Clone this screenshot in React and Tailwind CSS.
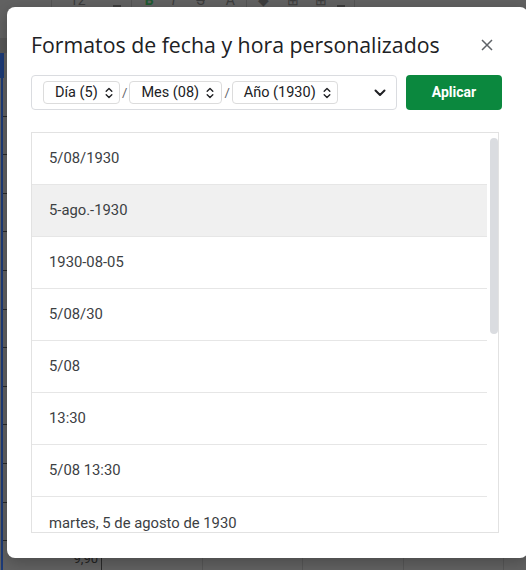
import React from "react";

const rows = [
  "5/08/1930",
  "5-ago.-1930",
  "1930-08-05",
  "5/08/30",
  "5/08",
  "13:30",
  "5/08 13:30",
  "martes, 5 de agosto de 1930",
];

function UpDown() {
  return (
    <svg width="8" height="12" viewBox="0 0 8 12" className="ml-[7px]">
      <path d="M1.2 4.3 L4 1.6 L6.8 4.3" fill="none" stroke="#202124" strokeWidth="1.4" strokeLinecap="round" strokeLinejoin="round" />
      <path d="M1.2 7.7 L4 10.4 L6.8 7.7" fill="none" stroke="#202124" strokeWidth="1.4" strokeLinecap="round" strokeLinejoin="round" />
    </svg>
  );
}

function Pill({ label, w }) {
  return (
    <div className={`flex items-center h-[23px] rounded-[4px] border border-[#dcdcdc] pl-[11px] ${w} text-[14.5px] text-[#202124]`}>
      <span>{label}</span>
      <UpDown />
    </div>
  );
}

export default function App() {
  return (
    <div className="relative w-[526px] h-[570px] overflow-hidden bg-[#626262]" style={{ fontFamily: "Roboto, 'Liberation Sans', sans-serif" }}>
      {/* background spreadsheet */}
      <div className="flex flex-col w-full h-full">
        <div className="h-[45px] flex items-start text-[#3d3d3d] text-[14px] leading-[14px] -mt-[7px]">
          <div className="w-[52px] border-r border-[#555] h-[16px]" />
          <span className="ml-[18px]">12</span>
          <span className="ml-[27px] w-[8px] h-[2px] bg-[#3d3d3d] mt-[12px]" />
          <div className="ml-[10px] border-r border-[#555] h-[16px]" />
          <span className="ml-[13px] font-bold text-[#1f5a32]">B</span>
          <span className="ml-[18px] italic">I</span>
          <span className="ml-[21px] line-through">S</span>
          <span className="ml-[21px]">A</span>
          <div className="ml-[11px] border-r border-[#555] h-[16px]" />
          <span className="ml-[11px]">◆</span>
          <span className="ml-[18px]">⊞</span>
          <span className="ml-[16px]">⊞</span>
          <span className="ml-[10px] w-[8px] h-[2px] bg-[#3d3d3d] mt-[12px]" />
          <div className="ml-[9px] border-r border-[#555] h-[16px]" />
          <span className="ml-[12px]">···</span>
        </div>
        <div className="h-[15px] bg-[#585858]" />
        <div className="h-[25px] w-[4px] border-2 border-[#1d3b78]" />
        <div className="flex-1 flex">
          <div className="w-[101px] ml-[1px] border-l-2 border-r border-l-[#1d3b78] border-r-[#2a2a2a] flex flex-col">
            {Array.from({ length: 12 }).map((_, i) => (
              <div key={i} className="h-[38.6px] border-b border-[#2a2a2a] shrink-0" />
            ))}
            <div className="text-right pr-[3px] text-[13px] leading-[15px] text-[#222] mt-[10px]">9,90</div>
          </div>
          <div className="w-[101px] border-r border-[#575757]" />
          <div className="w-[100px] border-r border-[#575757]" />
          <div className="w-[101px] border-r border-[#575757]" />
          <div className="w-[100px] border-r border-[#575757]" />
        </div>
      </div>

      {/* dialog */}
      <div className="absolute left-[7px] top-[7px] w-[521px] h-[551px] bg-white rounded-[8px] shadow-[0_4px_16px_rgba(0,0,0,0.25)] pl-[24px] pr-[24px] flex flex-col">
        <div className="flex items-center justify-between h-[62px] pt-[13px]">
          <h1 className="text-[21.3px] text-[#202124]" style={{ fontFamily: "'Open Sans', Roboto, sans-serif" }}>
            Formatos de fecha y hora personalizados
          </h1>
          <svg width="12" height="12" viewBox="0 0 12 12" className="mr-[11px] mt-[1px]">
            <path d="M1 1 L11 11 M11 1 L1 11" stroke="#5f6368" strokeWidth="1.5" />
          </svg>
        </div>
        <div className="flex items-center mt-[6px] h-[35px]">
          <div className="w-[366px] h-[35px] border border-[#dadce0] rounded-[4px] flex items-center pl-[11px] pr-[10px]">
            <Pill label="Día (5)" w="w-[77px]" />
            <span className="mx-[2px] text-[13px] text-[#5f6368]">/</span>
            <Pill label="Mes (08)" w="w-[93px]" />
            <span className="mx-[2px] text-[13px] text-[#5f6368]">/</span>
            <Pill label="Año (1930)" w="w-[106px]" />
            <div className="flex-1" />
            <svg width="12" height="8" viewBox="0 0 12 8">
              <path d="M1.5 1.5 L6 6 L10.5 1.5" fill="none" stroke="#202124" strokeWidth="2" strokeLinecap="round" strokeLinejoin="round" />
            </svg>
          </div>
          <button className="ml-[9px] w-[96px] h-[35px] rounded-[4px] bg-[#0b883e] text-white text-[14px] font-bold">
            Aplicar
          </button>
        </div>
        <div className="mt-[22px] w-[468px] h-[401px] border border-[#e2e2e2] flex overflow-hidden">
          <div className="w-[455px] flex flex-col">
            {rows.map((r, i) => (
              <div
                key={r}
                className={`h-[52px] shrink-0 flex items-center pl-[17px] text-[14.8px] text-[#3c4043] ${i < rows.length - 1 ? "border-b border-[#e6e6e6]" : ""} ${i === 1 ? "bg-[#f0f0f0]" : ""}`}
              >
                {r}
              </div>
            ))}
          </div>
          <div className="flex-1 pt-[5px] pl-[3px]">
            <div className="w-[8px] h-[196px] rounded-full bg-[#dadce0]" />
          </div>
        </div>
      </div>
    </div>
  );
}
